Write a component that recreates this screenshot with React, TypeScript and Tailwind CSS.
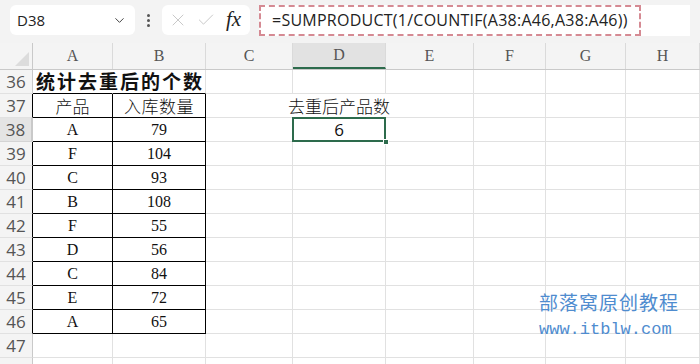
import { ChevronDown, X, Check } from "lucide-react";

const cols = ["A", "B", "C", "D", "E", "F", "G", "H"];
const colW = ["w-[80px]", "w-[93px]", "w-[87px]", "w-[93px]", "w-[88px]", "w-[72px]", "w-[80px]", "flex-1"];

const data: [string, string][] = [
  ["A", "79"],
  ["F", "104"],
  ["C", "93"],
  ["B", "108"],
  ["F", "55"],
  ["D", "56"],
  ["C", "84"],
  ["E", "72"],
  ["A", "65"],
];

const cellFont = { fontFamily: '"Liberation Serif", "Noto Sans CJK SC", serif' };
const cjkFont = { fontFamily: '"Noto Sans CJK SC", sans-serif' };

function Cell({ i, className = "", children }: { i: number; className?: string; children?: React.ReactNode }) {
  return (
    <div className={`${colW[i]} h-full shrink-0 border-r border-b border-[#e1e1e1] flex items-center justify-center text-[16px] text-[#111] ${className}`}>
      {children}
    </div>
  );
}

function RowHead({ n, active = false, dark = false }: { n?: number; active?: boolean; dark?: boolean }) {
  return (
    <div
      className={`w-[33px] h-full shrink-0 border-b flex items-center justify-center text-[17px] text-[#555] ${
        active ? "bg-[#e4e4e4] border-r-2 border-r-[#2d6b4c] border-b-[#d4d4d4]" : "bg-[#f4f4f4] border-r border-b-[#e1e1e1]"
      } ${dark && !active ? "border-r-black" : "border-r-[#c9c9c9]"}`}
      style={{ fontFamily: '"Open Sans", sans-serif' }}
    >
      {n}
    </div>
  );
}

export default function App() {
  return (
    <div className="relative w-[700px] h-[364px] overflow-hidden bg-white">
      {/* formula bar */}
      <div className="h-[43px] bg-[#f3f3f3] flex items-center px-[10px] pb-[3px]" style={{ fontFamily: '"Open Sans", sans-serif' }}>
        <div className="w-[125px] h-[30px] bg-white rounded-md flex items-center pl-[7px] pr-[8px] text-[15px] text-[#222]">
          <span className="flex-1">D38</span>
          <ChevronDown size={15} strokeWidth={1.6} className="text-[#444]" />
        </div>
        <div className="w-[27px] flex flex-col items-center gap-[2px]">
          <span className="w-[3px] h-[3px] bg-[#555] rounded-full" />
          <span className="w-[3px] h-[3px] bg-[#555] rounded-full" />
          <span className="w-[3px] h-[3px] bg-[#555] rounded-full" />
        </div>
        <div className="w-[88px] h-[30px] bg-white rounded-md flex items-center pl-[6px] gap-[8px] text-[#c4c4c4]">
          <X size={20} strokeWidth={1.1} />
          <Check size={20} strokeWidth={1.1} />
          <span className="text-[21px] italic text-[#222] ml-[2px]" style={{ fontFamily: '"Liberation Serif", serif' }}>
            fx
          </span>
        </div>
        <div className="ml-[9px] flex-1 h-[31px] bg-white rounded-l-sm flex items-center">
          <div className="h-full w-[382px] border-2 border-dashed border-[#d58a93] flex items-center pl-[11px] text-[16px] text-[#222] tracking-[0.25px]">
            =SUMPRODUCT(1/COUNTIF(A38:A46,A38:A46))
          </div>
        </div>
      </div>

      {/* column headers */}
      <div className="h-[27px] flex bg-[#f4f4f4] border-b border-[#c9c9c9]" style={cellFont}>
        <div className="w-[33px] shrink-0 border-r border-[#c9c9c9] relative">
          <div className="absolute right-[3px] bottom-[3px] w-0 h-0 border-l-[14px] border-l-transparent border-b-[14px] border-b-[#dcdcdc]" />
        </div>
        {cols.map((c, i) => (
          <div
            key={c}
            className={`${colW[i]} shrink-0 flex items-center justify-center text-[16px] text-[#555] border-r border-[#dadada] ${
              c === "D" ? "bg-[#e2e2e2] border-b-2 border-b-[#2d6b4c]" : ""
            }`}
          >
            {c}
          </div>
        ))}
      </div>

      {/* row 36 */}
      <div className="h-[24px] flex" style={cellFont}>
        <RowHead n={36} />
        <Cell i={0} className="justify-start border-r-transparent border-b-black overflow-visible">
          <span className="pl-[3px] whitespace-nowrap font-bold text-[19px] tracking-[2px]" style={cjkFont}>
            统计去重后的个数
          </span>
        </Cell>
        <Cell i={1} className="border-b-black" />
        {[2, 3, 4, 5, 6, 7].map((i) => (
          <Cell key={i} i={i} />
        ))}
      </div>

      {/* row 37 */}
      <div className="h-[24px] flex" style={cellFont}>
        <RowHead n={37} dark />
        <Cell i={0} className="border-r-black border-b-black">
          <span style={cjkFont} className="text-[17px] font-light">产品</span>
        </Cell>
        <Cell i={1} className="border-r-black border-b-black">
          <span style={cjkFont} className="text-[17px] font-light tracking-[0.5px]">入库数量</span>
        </Cell>
        <Cell i={2} className="border-r-transparent" />
        <Cell i={3} className="border-r-transparent overflow-visible">
          <span style={cjkFont} className="whitespace-nowrap text-[17px] font-light">去重后产品数</span>
        </Cell>
        {[4, 5, 6, 7].map((i) => (
          <Cell key={i} i={i} />
        ))}
      </div>

      {/* data rows */}
      {data.map(([p, q], r) => (
        <div key={r} className="h-[24px] flex" style={cellFont}>
          <RowHead n={38 + r} active={r === 0} dark />
          <Cell i={0} className="border-r-black border-b-black">{p}</Cell>
          <Cell i={1} className="border-r-black border-b-black">{q}</Cell>
          <Cell i={2} />
          {r === 0 ? (
            <div className="w-[93px] h-full shrink-0 relative border-b border-r border-[#e1e1e1]">
              <div className="absolute -left-[1px] -top-[1px] w-[94px] h-[25px] border-2 border-[#2d6b4c] flex items-center justify-center text-[17px] text-[#111]" style={{ fontFamily: '"Open Sans", sans-serif' }}>
                6
              </div>
              <div className="absolute -right-[4px] -bottom-[4px] w-[6px] h-[6px] bg-[#2d6b4c] border border-white" />
            </div>
          ) : (
            <Cell i={3} />
          )}
          {[4, 5, 6, 7].map((i) => (
            <Cell key={i} i={i} />
          ))}
        </div>
      ))}

      {/* rows 47, 48 (48 only peeks in at the bottom) */}
      {[47, 48].map((n) => (
        <div key={n} className="h-[24px] flex" style={cellFont}>
          <RowHead n={n === 47 ? n : undefined} />
          {[0, 1, 2, 3, 4, 5, 6, 7].map((i) => (
            <Cell key={i} i={i} />
          ))}
        </div>
      ))}

      {/* watermark */}
      <div className="absolute left-[539px] top-[292px] text-[#4f8ccf] leading-none">
        <div className="text-[19px] tracking-[1px]" style={cjkFont}>部落窝原创教程</div>
        <div className="mt-[10px] text-[17px]" style={{ fontFamily: '"Liberation Mono", monospace' }}>
          www.itblw.com
        </div>
      </div>
    </div>
  );
}
